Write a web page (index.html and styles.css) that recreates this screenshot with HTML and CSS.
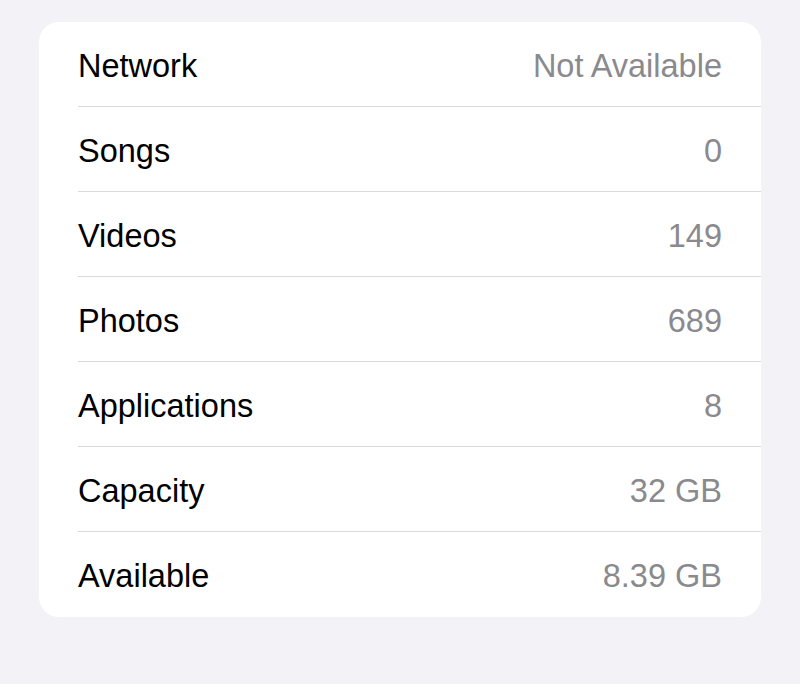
FILE: index.html
```html
<!DOCTYPE html>
<html lang="en">
<head>
    <meta charset="UTF-8">
    <meta name="viewport" content="width=device-width, initial-scale=1.0">
    <title>About</title>
    <link rel="stylesheet" href="styles.css">
</head>
<body>

<!-- Device info list -->
<div class="info-card">
    <div class="info-row">
        <span class="label">Network</span>
        <span class="value">Not Available</span>
    </div>
    <div class="info-row">
        <span class="label">Songs</span>
        <span class="value">0</span>
    </div>
    <div class="info-row">
        <span class="label">Videos</span>
        <span class="value">149</span>
    </div>
    <div class="info-row">
        <span class="label">Photos</span>
        <span class="value">689</span>
    </div>
    <div class="info-row">
        <span class="label">Applications</span>
        <span class="value">8</span>
    </div>
    <div class="info-row">
        <span class="label">Capacity</span>
        <span class="value">32 GB</span>
    </div>
    <div class="info-row">
        <span class="label">Available</span>
        <span class="value">8.39 GB</span>
    </div>
</div>

</body>
</html>
```

FILE: styles.css
```css
/* Basic styling */
body {
    font-family: "Liberation Sans", Arial, sans-serif;
    background-color: #f2f2f7;
    margin: 0;
    padding: 22px 39px;
}

/* Grouped list card */
.info-card {
    background-color: #ffffff;
    border-radius: 20px;
    padding-left: 39px;
}

.info-row {
    display: flex;
    justify-content: space-between;
    align-items: center;
    height: 85px;
    padding-top: 4px;
    padding-right: 39px;
    border-bottom: 1px solid #d9d9dc;
    box-sizing: border-box;
    font-size: 32.5px;
}

.info-row:last-child {
    border-bottom: none;
}

.label {
    color: #000000;
}

.value {
    color: #8a8a8e;
}
```
